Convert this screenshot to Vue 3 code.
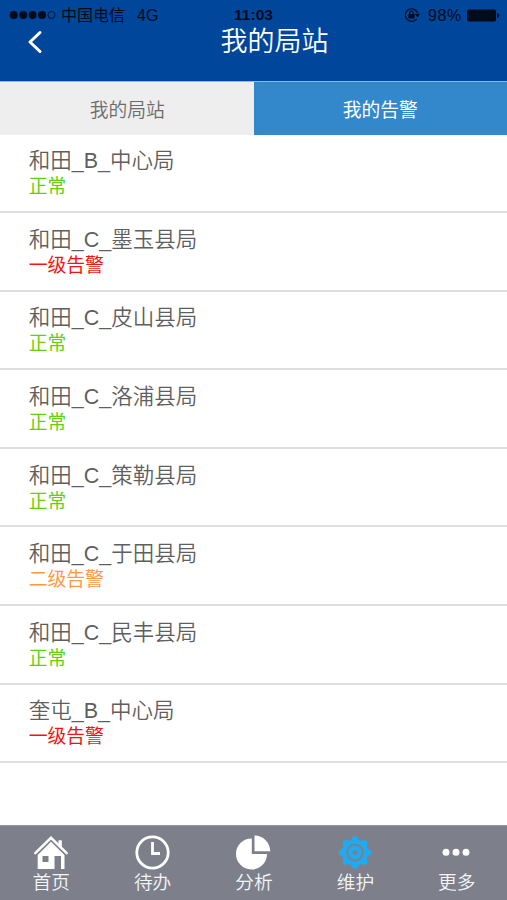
<script setup>
const stations = [
  { name: '和田_B_中心局', status: '正常', level: 'normal' },
  { name: '和田_C_墨玉县局', status: '一级告警', level: 'critical' },
  { name: '和田_C_皮山县局', status: '正常', level: 'normal' },
  { name: '和田_C_洛浦县局', status: '正常', level: 'normal' },
  { name: '和田_C_策勒县局', status: '正常', level: 'normal' },
  { name: '和田_C_于田县局', status: '二级告警', level: 'warning' },
  { name: '和田_C_民丰县局', status: '正常', level: 'normal' },
  { name: '奎屯_B_中心局', status: '一级告警', level: 'critical' },
]
const teeth = [0, 45, 90, 135, 180, 225, 270, 315]
</script>

<template>
  <div class="screen">
    <header class="header">
      <div class="status-bar">
        <div class="side">
          <svg class="signal" width="47" height="10" viewBox="0 0 47 10">
            <circle cx="4.700" cy="5" r="4" />
            <circle cx="14.200" cy="5" r="4" />
            <circle cx="23.600" cy="5" r="4" />
            <circle cx="33" cy="5" r="4" />
            <circle cx="42.500" cy="5" r="3.500" class="hollow" />
          </svg>
          <span class="carrier">中国电信</span>
          <span class="network">4G</span>
        </div>
        <span class="time">11:03</span>
        <div class="side right">
          <svg class="lock" width="17" height="16" viewBox="0 0 17 16">
            <path d="M12.700 11.800A6.300 6.300 0 1 1 13.700 6.500" fill="none" stroke="#020b1c" stroke-width="1.200" />
            <path d="M10.900 7.100h5.200l-2.600 3.300z" />
            <rect x="4.500" y="7" width="6" height="4.500" rx=".6" />
            <path d="M5.800 7.200V5.700a1.700 1.700 0 0 1 3.400 0v1.500" fill="none" stroke="#020b1c" stroke-width="1.100" />
          </svg>
          <span class="percent">98%</span>
          <svg width="34" height="13" viewBox="0 0 34 13">
            <rect x="1" y=".5" width="29" height="12" rx="1.800" />
            <path d="M31 4q2.300.400 2.300 2.500t-2.300 2.500z" />
          </svg>
        </div>
      </div>
      <div class="nav">
        <svg class="back" width="16" height="24" viewBox="0 0 16 24">
          <path d="M13 2.500 3 12l10 9.500" fill="none" stroke="#fff" stroke-width="3" stroke-linecap="round" stroke-linejoin="round" />
        </svg>
        <h1>我的局站</h1>
      </div>
    </header>

    <div class="tabs">
      <div class="tab">我的局站</div>
      <div class="tab active">我的告警</div>
    </div>

    <ul class="list">
      <li v-for="station in stations" :key="station.name">
        <span class="name">{{ station.name }}</span>
        <span class="state" :class="station.level">{{ station.status }}</span>
      </li>
    </ul>

    <footer class="footer">
      <div class="item">
        <svg width="36" height="36" viewBox="0 0 36 36">
          <path d="M2.300 18.200 18 2.800 33.700 18.200" fill="none" stroke="#fff" stroke-width="2.500" stroke-linecap="round" />
          <path d="M25.500 5.200h3.300v7.500L25.500 9.500z" fill="#fff" />
          <path fill-rule="evenodd" fill="#fff" d="M18 6.800 31.500 20v14H28V21h-6.500v13H4.700V20zM9.500 21v6h6v-6z" />
        </svg>
        <span>首页</span>
      </div>
      <div class="item">
        <svg width="36" height="36" viewBox="0 0 36 36">
          <circle cx="18.500" cy="17.500" r="15.700" fill="none" stroke="#fff" stroke-width="2.800" />
          <path d="M18.500 7v11.500h7.500" fill="none" stroke="#fff" stroke-width="2.800" />
        </svg>
        <span>待办</span>
      </div>
      <div class="item">
        <svg width="36" height="36" viewBox="0 0 36 36">
          <path d="M16.800 3.500A15.500 15.500 0 1 0 32 19H16.800z" fill="#fff" />
          <path d="M19.500 .6A15.700 15.700 0 0 1 35.200 16.300H19.500z" fill="#fff" />
        </svg>
        <span>分析</span>
      </div>
      <div class="item">
        <svg width="36" height="36" viewBox="0 0 36 36">
          <g fill="#1faaf2">
            <path v-for="angle in teeth" :key="angle" d="M11.800 8 16.500 1.300h3L24.200 8z" :transform="`rotate(${angle} 18 17.500)`" />
          </g>
          <circle cx="18" cy="17.500" r="10.900" fill="none" stroke="#1faaf2" stroke-width="4" />
          <circle cx="18" cy="17.500" r="4.700" fill="none" stroke="#1faaf2" stroke-width="4.400" />
        </svg>
        <span>维护</span>
      </div>
      <div class="item">
        <svg width="36" height="36" viewBox="0 0 36 36">
          <g fill="#fff">
            <circle cx="8" cy="17.300" r="3.500" />
            <circle cx="18" cy="17.300" r="3.500" />
            <circle cx="28" cy="17.300" r="3.500" />
          </g>
        </svg>
        <span>更多</span>
      </div>
    </footer>
  </div>
</template>

<style>
body {
  margin: 0;
  background: #fff;
}
</style>

<style scoped>
.screen {
  display: flex;
  flex-direction: column;
  height: 900px;
  overflow: hidden;
  background: #fff;
  font-family: "Liberation Sans", "Noto Sans CJK SC", sans-serif;
  font-weight: 350;
}
svg {
  display: block;
  flex: none;
}
.header {
  box-sizing: border-box;
  flex: none;
  height: 82px;
  background: #00469b;
  border-bottom: 1px solid #8db7df;
}
.status-bar {
  display: grid;
  grid-template-columns: 1fr auto 1fr;
  align-items: center;
  box-sizing: border-box;
  height: 28px;
  padding: 2px 7px 0 9px;
  color: #020b1c;
  fill: #020b1c;
  line-height: 26px;
}
.side {
  display: flex;
  align-items: center;
  height: 26px;
}
.right {
  justify-content: flex-end;
}
.hollow {
  fill: none;
  stroke: #020b1c;
  stroke-width: 0.8;
}
.carrier {
  margin-left: 5px;
  padding-top: 2px;
  font-size: 16px;
  font-weight: 400;
}
.network {
  margin-left: 12px;
  padding-top: 1px;
  font-size: 16px;
}
.time {
  padding-right: 2px;
  font-size: 15.5px;
  font-weight: 700;
}
.lock {
  margin-right: 7px;
}
.percent {
  margin-right: 4px;
  padding-top: 1px;
  font-size: 16px;
  letter-spacing: 0.7px;
}
.nav {
  display: grid;
  grid-template-columns: 60px 1fr 60px;
  align-items: center;
  height: 27px;
}
.back {
  margin-left: 27px;
}
h1 {
  margin: 0;
  padding: 0 0 0 42px;
  color: #fff;
  font-size: 27px;
  font-weight: 350;
  line-height: 28px;
  text-align: center;
}
.tabs {
  display: grid;
  grid-template-columns: 1fr 1fr;
  flex: none;
  height: 52.5px;
}
.tab {
  display: flex;
  align-items: center;
  justify-content: center;
  padding-left: 1px;
  background: #eee;
  color: #6c6c6c;
  font-size: 18.8px;
}
.tab.active {
  padding-left: 0;
  background: #3388cc;
  color: #fff;
  font-weight: 400;
}
.list {
  flex: 1;
  margin: 0;
  padding: 0;
  list-style: none;
}
.list li {
  display: flex;
  flex-direction: column;
  box-sizing: border-box;
  height: 78.6px;
  padding: 13.7px 28.7px 0;
  border-bottom: 2px solid #dedede;
}
.name {
  color: #5f5f5f;
  font-size: 21.5px;
  line-height: 26px;
}
.state {
  padding-top: 1px;
  font-size: 18.8px;
  font-weight: 400;
  line-height: 24px;
}
.normal {
  color: #5fd10d;
}
.critical {
  color: #fb1010;
}
.warning {
  color: #ff9a41;
}
.footer {
  display: grid;
  grid-template-columns: repeat(5, 1fr);
  box-sizing: border-box;
  flex: none;
  height: 75px;
  padding-top: 9px;
  background: #7d808b;
  border-top: 1px solid #969aa0;
}
.item {
  display: flex;
  flex-direction: column;
  align-items: center;
  color: #f4f5f8;
  font-size: 18.7px;
  line-height: 23px;
}
.item span {
  padding-left: 1px;
}
</style>
